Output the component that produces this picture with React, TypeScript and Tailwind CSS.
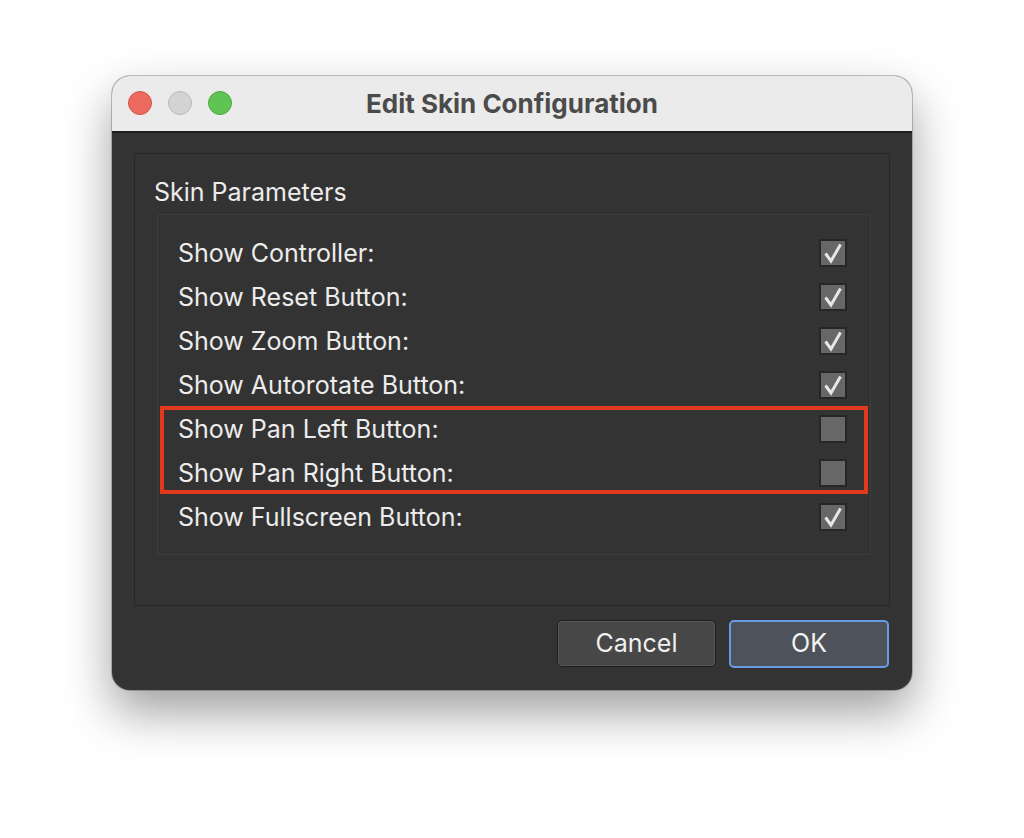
import React from 'react'

interface Param {
  label:   string
  checked: boolean
}

const PARAMS: Param[] = [
  { label: 'Show Controller:',         checked: true },
  { label: 'Show Reset Button:',       checked: true },
  { label: 'Show Zoom Button:',        checked: true },
  { label: 'Show Autorotate Button:',  checked: true },
  { label: 'Show Pan Left Button:',    checked: false },
  { label: 'Show Pan Right Button:',   checked: false },
  { label: 'Show Fullscreen Button:',  checked: true },
]

function Checkbox({ checked }: { checked: boolean }) {
  return (
    <div className="w-[28px] h-[28px] border-[2px] border-[#262626] bg-[#676767] flex items-center justify-center">
      {checked && (
        <svg width="24" height="24" viewBox="0 0 24 24" fill="none">
          <path d="M4.5 12.5 L10 20 L19.5 3.5" stroke="#e6e6e6" strokeWidth="3" strokeLinejoin="miter" />
        </svg>
      )}
    </div>
  )
}

function Row({ p }: { p: Param }) {
  return (
    <div className="h-[44px] flex items-center justify-between pl-[20px] pr-[23px]">
      <span className="pt-[2px]">{p.label}</span>
      <Checkbox checked={p.checked} />
    </div>
  )
}

export default function App() {
  const top = PARAMS.slice(0, 4)
  const pan = PARAMS.slice(4, 6)
  const rest = PARAMS.slice(6)

  return (
    <div
      className="w-[1024px] h-[838px] bg-white pt-[76px] pl-[112px]"
      style={{ fontFamily: 'Inter, "Noto Sans", sans-serif' }}
    >
      <div className="w-[800px] h-[614px] rounded-[18px] overflow-hidden flex flex-col bg-[#333333] shadow-[0_22px_48px_rgba(0,0,0,0.38),0_0_0_1px_rgba(0,0,0,0.22)]">
        {/* Title bar */}
        <div className="relative h-[57px] shrink-0 bg-[#ebebeb] border-b-[2px] border-[#1c1c1c] flex items-center justify-center">
          <div className="absolute left-[16px] top-[15px] flex gap-[16px]">
            <span className="w-[24px] h-[24px] rounded-full bg-[#ec6a5e] border border-[#d2544a]" />
            <span className="w-[24px] h-[24px] rounded-full bg-[#d3d3d3] border border-[#bababa]" />
            <span className="w-[24px] h-[24px] rounded-full bg-[#5fc454] border border-[#4ea843]" />
          </div>
          <span className="text-[26px] font-bold text-[#4b4b4b] leading-none">Edit Skin Configuration</span>
        </div>

        {/* Body */}
        <div className="flex-1 flex flex-col px-[22px] pt-[20px] text-[25px] text-[#ececec]">
          <div className="h-[453px] border border-[#262626] pl-[19px] pr-[18px] pt-[25px]">
            <div className="leading-[26px] mb-[9px]">Skin Parameters</div>
            <div className="ml-[3px] border-[1px] border-[#3e3e3e] rounded-[2px] pt-[16px] pb-[15px]">
              {top.map((p) => <Row key={p.label} p={p} />)}
              <div className="relative">
                {pan.map((p) => <Row key={p.label} p={p} />)}
                <span className="absolute left-[2px] right-[2px] -top-[1px] bottom-[1px] border-[4px] border-[#e0391b] pointer-events-none" />
              </div>
              {rest.map((p) => <Row key={p.label} p={p} />)}
            </div>
          </div>

          <div className="flex justify-end gap-[13px] mt-[14px] mr-[1px]">
            <button className="w-[159px] h-[47px] rounded-[5px] border border-[#1e1e1e] bg-[#474747] shadow-[inset_0_0_0_1px_#585858] text-[#f0f0f0] text-[25px]">
              Cancel
            </button>
            <button className="w-[160px] h-[48px] rounded-[5px] border-[2px] border-[#6a9be2] bg-[#4d525b] text-[#f2f2f2] text-[25px]">
              OK
            </button>
          </div>
        </div>
      </div>
    </div>
  )
}
